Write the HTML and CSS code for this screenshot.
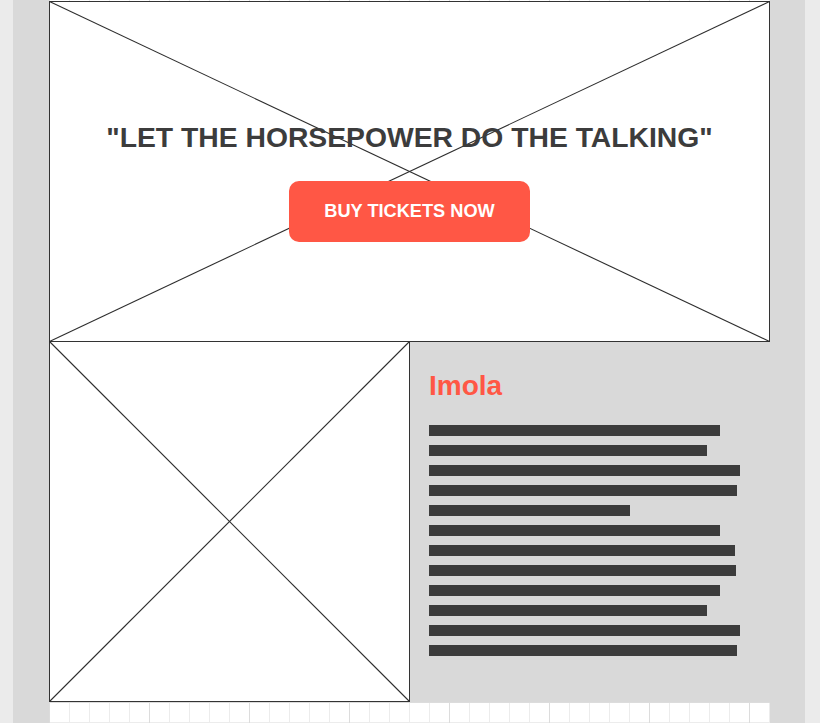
FILE: index.html
```html
<!DOCTYPE html>
<html lang="en">
<head>
<meta charset="utf-8">
<title>Imola</title>
<link rel="stylesheet" href="styles.css">
</head>
<body>
<div class="col">
  <div class="wrap">
    <section class="hero">
      <svg class="xlines" viewBox="0 0 721 341" preserveAspectRatio="none" aria-hidden="true">
        <line x1="0.5" y1="0.5" x2="720.5" y2="340.5"/>
        <line x1="720.5" y1="0.5" x2="0.5" y2="340.5"/>
      </svg>
      <h1 class="hero-title">"LET THE HORSEPOWER DO THE TALKING"</h1>
      <a class="btn" href="#">BUY TICKETS NOW</a>
    </section>
    <div class="row">
      <div class="thumb">
        <svg class="xlines" viewBox="0 0 361 361" preserveAspectRatio="none" aria-hidden="true">
          <line x1="0.5" y1="0.5" x2="360.5" y2="360.5"/>
          <line x1="360.5" y1="0.5" x2="0.5" y2="360.5"/>
        </svg>
      </div>
      <div class="panel">
        <h2 class="panel-title">Imola</h2>
        <div class="bars">
          <span class="bar" style="width:291px"></span>
          <span class="bar" style="width:278px"></span>
          <span class="bar" style="width:311px"></span>
          <span class="bar" style="width:308px"></span>
          <span class="bar" style="width:201px"></span>
          <span class="bar" style="width:291px"></span>
          <span class="bar" style="width:306px"></span>
          <span class="bar" style="width:307px"></span>
          <span class="bar" style="width:291px"></span>
          <span class="bar" style="width:278px"></span>
          <span class="bar" style="width:311px"></span>
          <span class="bar" style="width:308px"></span>
        </div>
      </div>
    </div>
  </div>
</div>
</body>
</html>
```
FILE: styles.css
```css
html, body {
  margin: 0;
  padding: 0;
}
body {
  background: #ebebeb;
  font-family: "Liberation Sans", Arial, sans-serif;
  overflow: hidden;
}
.col {
  margin-left: 13px;
  width: 792px;
  min-height: 723px;
  background: #d9d9d9;
  padding-left: 36px;
  box-sizing: border-box;
}
.wrap {
  width: 721px;
  min-height: 723px;
  padding-top: 1px;
  box-sizing: border-box;
  background-color: #ffffff;
  background-image:
    linear-gradient(to right, #dcdcdc 1px, transparent 1px),
    linear-gradient(to bottom, #dcdcdc 1px, transparent 1px),
    linear-gradient(to right, #ececec 1px, transparent 1px),
    linear-gradient(to bottom, #ececec 1px, transparent 1px);
  background-size: 100px 100px, 100px 100px, 20px 20px, 20px 20px;
  background-position: 0 2px, 0 2px, 0 2px, 0 2px;
}
.hero {
  position: relative;
  height: 341px;
  box-sizing: border-box;
  border: 1px solid #333333;
  background: #ffffff;
  display: flex;
  flex-direction: column;
  align-items: center;
  padding-top: 119px;
}
.xlines {
  position: absolute;
  left: -1px;
  top: -1px;
  width: calc(100% + 2px);
  height: calc(100% + 2px);
  stroke: #2e2e2e;
  stroke-width: 1.1;
  fill: none;
}
.hero-title {
  position: relative;
  margin: 0;
  font-size: 28.3px;
  line-height: 32px;
  font-weight: 700;
  color: #3c3c3c;
  white-space: nowrap;
}
.btn {
  position: relative;
  margin-top: 28px;
  width: 241px;
  height: 61px;
  border-radius: 10px;
  background: #ff5745;
  color: #ffffff;
  font-size: 18.2px;
  font-weight: 700;
  text-decoration: none;
  display: flex;
  align-items: center;
  justify-content: center;
}
.row {
  display: flex;
}
.thumb {
  position: relative;
  width: 361px;
  height: 360px;
  box-sizing: border-box;
  border-left: 1px solid #333333;
  border-right: 1px solid #333333;
  border-bottom: 1px solid #333333;
  background: #ffffff;
}
.thumb .xlines {
  top: -1px;
  left: -1px;
  width: 361px;
  height: 361px;
}
.panel {
  flex: 1;
  height: 360px;
  background: #d9d9d9;
  padding: 28px 0 0 19px;
  box-sizing: border-box;
}
.panel-title {
  margin: 0;
  font-size: 28px;
  line-height: 32px;
  font-weight: 700;
  color: #ff5745;
}
.bars {
  margin-top: 23px;
  display: flex;
  flex-direction: column;
  gap: 9px;
}
.bar {
  display: block;
  height: 11px;
  background: #3c3c3c;
}
```
